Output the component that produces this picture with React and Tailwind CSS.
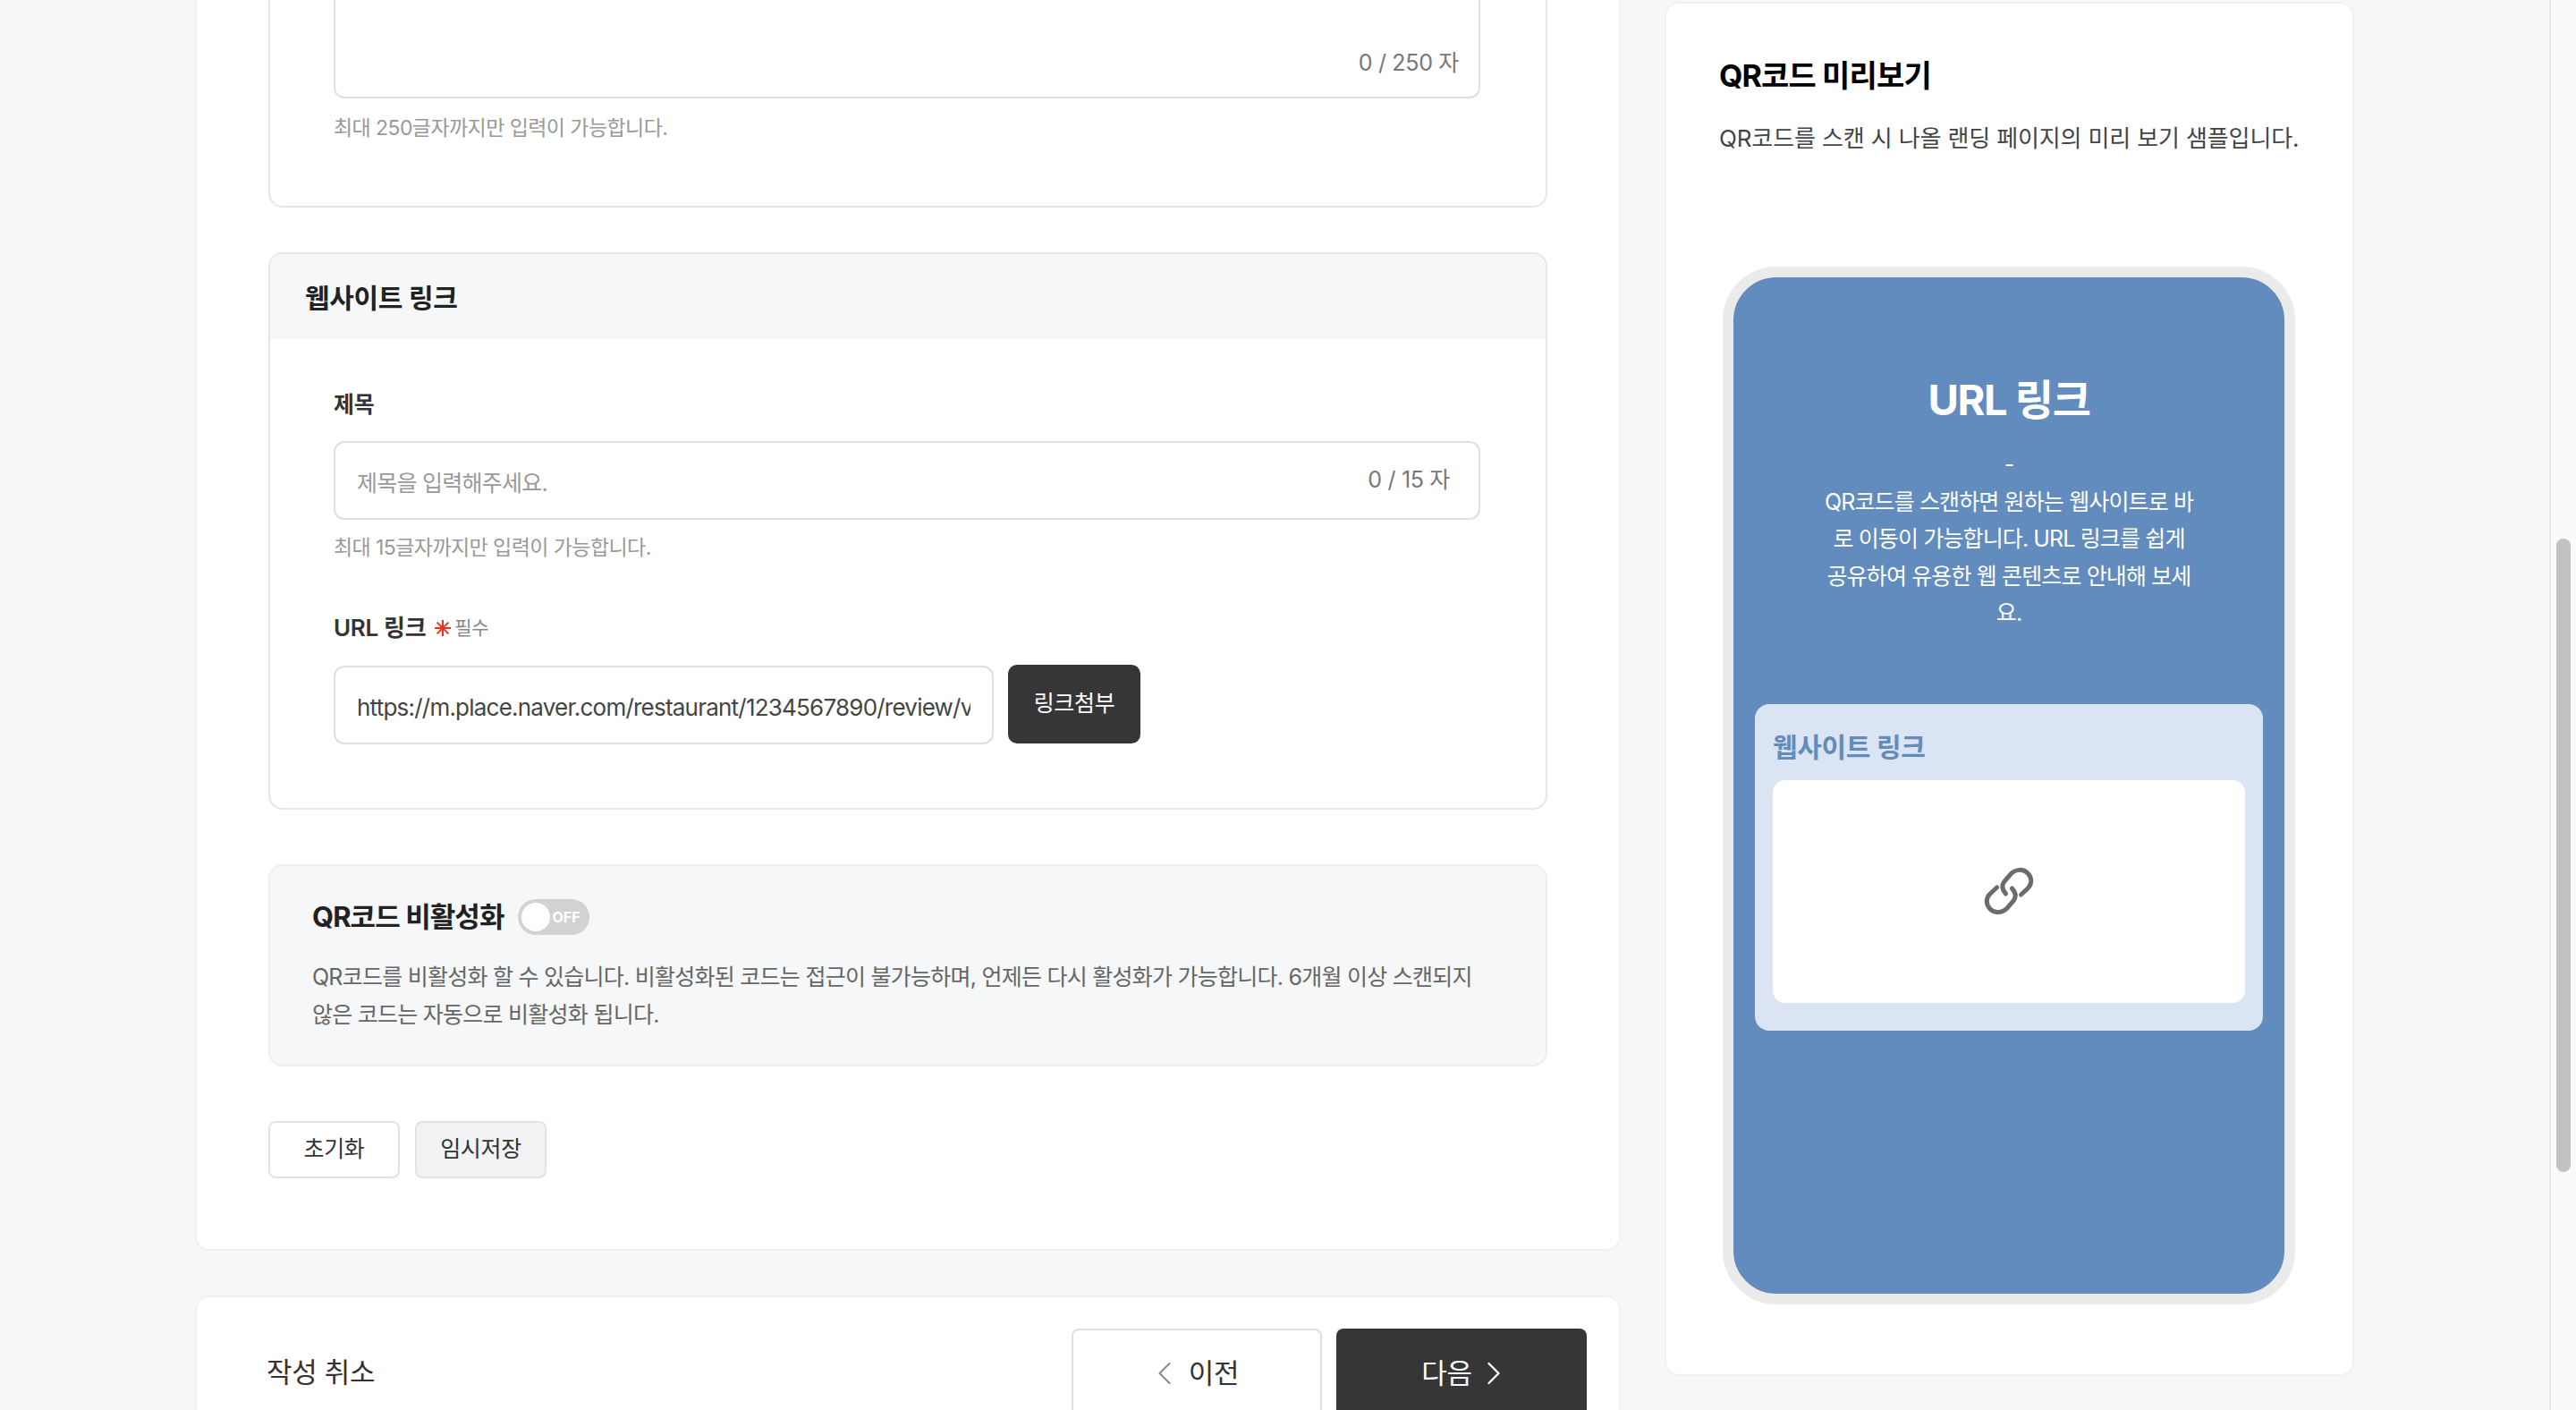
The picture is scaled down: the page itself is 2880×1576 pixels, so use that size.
import { ChevronLeft, ChevronRight } from "lucide-react";

const Asterisk = () => (
    <svg width="18" height="18" viewBox="0 0 18 18" stroke="#ee3124" strokeWidth="2" className="shrink-0">
        <path d="M9 0v18M0 9h18M2.6 2.6l12.8 12.8M15.4 2.6L2.6 15.4" />
    </svg>
);

const ChainIcon = () => (
    <svg width="80" height="80" viewBox="0 0 80 80" fill="none" stroke="#6b6b6b" strokeWidth="5" strokeLinecap="round">
        <path d="M36.5 43C32 38 32 33 35 29L42 21C48 15 56 15 61 20C66 25 66 32 61 37L53.5 44" />
        <path d="M43.5 37C48 42 48 47 45 51L38 59C32 65 24 65 19 60C14 55 14 48 19 43L26.5 36" />
    </svg>
);

const App = () => {
    return (
        <div className="flex h-[1576px] overflow-hidden bg-[#f6f7f9] font-[family-name:Inter,'Noto_Sans_CJK_KR',sans-serif] tracking-[-0.02em] text-[#222]">
            <div className="flex flex-1 items-start pl-[218px]">
                {/* left column, page is scrolled so the top is cut off */}
                <div className="-mt-[103px] flex w-[1594px] shrink-0 flex-col gap-[50px]">
                    <div className="rounded-b-[16px] border-2 border-[#f1f1f3] bg-white pb-[79px] pl-[80px] pr-[80px]">
                        <div className="rounded-[16px] border-2 border-[#e6e6e8] pb-[70px] pl-[71px] pr-[73px] pt-[8px]">
                            <div className="flex h-[201px] items-end justify-end rounded-[12px] border-2 border-[#dfdfe1] px-[22px] pb-[20px] text-[25px] leading-[36px] text-[#777]">
                                0 / 250 자
                            </div>
                            <p className="mt-[16px] text-[23px] leading-[34px] tracking-[-0.025em] text-[#999]">최대 250글자까지만 입력이 가능합니다.</p>
                        </div>

                        <div className="mt-[50px] overflow-hidden rounded-[16px] border-2 border-[#e6e6e8]">
                            <div className="flex h-[95px] items-center bg-[#f6f7f9] px-[39px] pt-[3px] text-[30px] font-bold">웹사이트 링크</div>
                            <div className="pb-[71px] pl-[71px] pr-[73px] pt-[56px]">
                                <label className="block text-[25px] font-semibold leading-[34px] text-[#333]">제목</label>
                                <div className="mt-[24px] flex h-[88px] items-center rounded-[12px] border-2 border-[#dfdfe1] pl-[24px] pr-[32px]">
                                    <input
                                        readOnly
                                        placeholder="제목을 입력해주세요."
                                        className="min-w-0 flex-1 bg-transparent pt-[8px] text-[25px] tracking-[-0.03em] outline-none placeholder:text-[#999]"
                                    />
                                    <span className="text-[25px] text-[#777]">0 / 15 자</span>
                                </div>
                                <p className="mt-[14px] text-[23px] leading-[34px] tracking-[-0.025em] text-[#999]">최대 15글자까지만 입력이 가능합니다.</p>

                                <div className="mt-[55px] flex items-center">
                                    <span className="text-[26px] font-semibold leading-[36px] text-[#333]">URL 링크</span>
                                    <span className="ml-[10px]"><Asterisk /></span>
                                    <span className="ml-[4px] text-[21px] text-[#888]">필수</span>
                                </div>
                                <div className="mt-[23px] flex items-start gap-[16px]">
                                    <input
                                        readOnly
                                        value="https://m.place.naver.com/restaurant/1234567890/review/visitor"
                                        className="mt-[1px] h-[88px] w-[738px] rounded-[12px] border-2 border-[#dfdfe1] px-[24px] pt-[5px] text-[26px] tracking-[-0.03em] text-[#444] outline-none"
                                    />
                                    <button className="h-[88px] w-[148px] rounded-[10px] bg-[#363638] text-[25px] text-white">링크첨부</button>
                                </div>
                            </div>
                        </div>

                        <div className="mt-[61px] rounded-[16px] border-2 border-[#eeeef0] bg-[#f6f7f9] pb-[35px] pl-[47px] pr-[70px] pt-[35px]">
                            <div className="flex items-center gap-[15px]">
                                <span className="text-[31px] font-bold leading-[44px] tracking-[-0.03em] text-[#222]">QR코드 비활성화</span>
                                <div className="flex h-[40px] w-[80px] items-center justify-between rounded-full bg-[#d2d2d4] pl-[4px] pr-[10px]">
                                    <span className="h-[32px] w-[32px] rounded-full bg-white" />
                                    <span className="text-[16px] font-bold tracking-normal text-white">OFF</span>
                                </div>
                            </div>
                            <p className="mt-[24px] text-[25px] leading-[42px] tracking-[-0.03em] text-[#666]">
                                QR코드를 비활성화 할 수 있습니다. 비활성화된 코드는 접근이 불가능하며, 언제든 다시 활성화가 가능합니다. 6개월 이상 스캔되지 않은 코드는 자동으로 비활성화 됩니다.
                            </p>
                        </div>

                        <div className="mt-[61px] flex gap-[17px]">
                            <button className="h-[64px] w-[147px] rounded-[8px] border-2 border-[#e3e3e5] bg-white text-[25px] text-[#333]">초기화</button>
                            <button className="h-[64px] w-[147px] rounded-[8px] border-2 border-[#e3e3e5] bg-[#f1f2f4] text-[25px] text-[#333]">임시저장</button>
                        </div>
                    </div>

                    <div className="flex items-start justify-between rounded-t-[16px] border-2 border-[#f1f1f3] bg-white pb-[60px] pl-[78px] pr-[36px] pt-[35px]">
                        <span className="mt-[29px] text-[31px] leading-[40px] text-[#333]">작성 취소</span>
                        <div className="flex gap-[16px]">
                            <button className="flex h-[100px] w-[280px] items-center justify-center gap-[5px] rounded-[8px] border-2 border-[#dfdfe1] bg-white pr-[11px] text-[31px] text-[#333]">
                                <ChevronLeft size={44} strokeWidth={1.1} className="text-[#888]" />
                                이전
                            </button>
                            <button className="flex h-[100px] w-[280px] items-center justify-center gap-[2px] rounded-[8px] bg-[#363638] pl-[13px] text-[31px] text-white">
                                다음
                                <ChevronRight size={44} strokeWidth={1.25} />
                            </button>
                        </div>
                    </div>
                </div>

                {/* preview panel */}
                <aside className="ml-[49px] mt-[2px] flex h-[1536px] w-[771px] shrink-0 flex-col rounded-[16px] border-2 border-[#f1f1f3] bg-white pl-[59px] pr-[58px] pt-[58px]">
                    <h2 className="text-[34px] font-bold leading-[46px] tracking-[-0.025em] text-black">QR코드 미리보기</h2>
                    <p className="mt-[24px] whitespace-nowrap text-[26px] leading-[46px] tracking-[-0.005em] text-[#444]">QR코드를 스캔 시 나올 랜딩 페이지의 미리 보기 샘플입니다.</p>
                    <div className="ml-[4px] mt-[120px] flex h-[1160px] w-[640px] flex-col items-center rounded-[60px] border-[12px] border-[#ebebeb] bg-[#628cbd] px-[24px]">
                        <h3 className="mt-[107px] text-[47px] font-bold leading-[60px] tracking-[-0.03em] text-white">URL 링크</h3>
                        <p className="mt-[22px] w-[418px] text-center text-[25px] leading-[41.5px] tracking-[-0.035em] text-white">
                            -<br />
                            QR코드를 스캔하면 원하는 웹사이트로 바로 이동이 가능합니다. URL 링크를 쉽게 공유하여 유용한 웹 콘텐츠로 안내해 보세요.
                        </p>
                        <div className="mt-[80px] w-full rounded-[16px] bg-[#dbe4f2] px-[20px] pb-[31px] pt-[28px]">
                            <div className="text-[30px] font-bold leading-[40px] text-[#628cbd]">웹사이트 링크</div>
                            <div className="mt-[17px] flex h-[249px] items-center justify-center rounded-[14px] bg-white">
                                <ChainIcon />
                            </div>
                        </div>
                    </div>
                </aside>
            </div>

            {/* scrollbar */}
            <div className="w-[30px] shrink-0 border-l-2 border-[#e8e8e8] bg-[#fafafa] pl-[6px] pt-[602px]">
                <div className="h-[708px] w-[16px] rounded-full bg-[#c1c1c1]" />
            </div>
        </div>
    );
};

export default App;
